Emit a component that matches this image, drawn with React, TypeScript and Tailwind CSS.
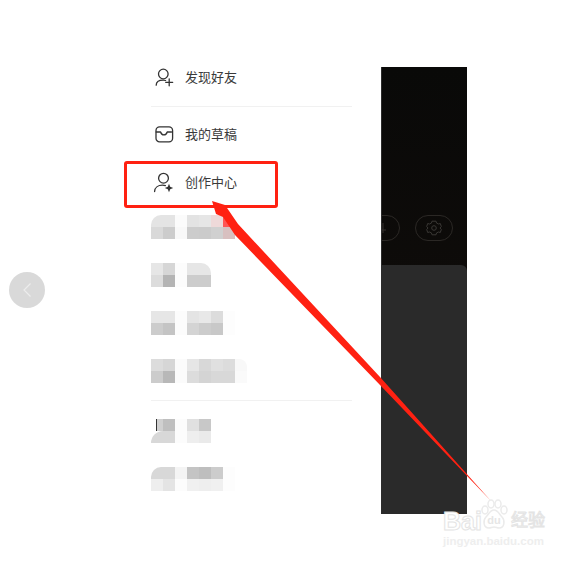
import React from "react";

const MOSAIC: string[][][] = [
  [
    ["bg-[#e4e4e4] rounded-tl-[10px]", "bg-[#e4e4e4]", "bg-[#fbfbfb]", "bg-[#e3e3e3]", "bg-[#e6e6e6]", "bg-[#eed9d9]", "bg-[#ff5555] rounded-tr-[10px]"],
    ["bg-[#d9d9d9]", "bg-[#cccccc]", "bg-[#f8f8f8]", "bg-[#cccccc]", "bg-[#cbcbcb]", "bg-[#d0d0d0]", "bg-[#d8c0c0]"],
  ],
  [
    ["bg-[#e6e6e6]", "bg-[#d6d6d6]", "bg-[#fcfcfc]", "bg-[#e6e6e6]", "bg-[#e6e6e6] rounded-tr-[10px]"],
    ["bg-[#dcdcdc]", "bg-[#b4b4b4]", "bg-[#fcfcfc]", "bg-[#cccccc]", "bg-[#cccccc]"],
  ],
  [
    ["bg-[#e6e6e6]", "bg-[#e6e6e6]", "bg-[#fcfcfc]", "bg-[#e4e4e4]", "bg-[#e8e8e8]", "bg-[#dcdcdc]", "bg-[#fdfdfd]"],
    ["bg-[#cccccc]", "bg-[#c4c4c4]", "bg-[#fcfcfc]", "bg-[#d4d4d4]", "bg-[#cccccc]", "bg-[#c8c8c8]", "bg-[#fdfdfd]"],
  ],
  [
    ["bg-[#dcdcdc]", "bg-[#d6d6d6]", "bg-[#fbfbfb]", "bg-[#e6e6e6]", "bg-[#d8d8d8]", "bg-[#e0e0e0]", "bg-[#dcdcdc]", "bg-[#f8f8f8] rounded-tr-[8px]"],
    ["bg-[#cccccc]", "bg-[#b8b8b8]", "bg-[#fbfbfb]", "bg-[#dcdcdc]", "bg-[#d4d4d4]", "bg-[#d8d8d8]", "bg-[#d8d8d8]", "bg-[#fafafa]"],
  ],
];

const MOSAIC_LOWER: string[][][] = [
  [
    ["bg-[#d0d0d0] border-l-[5px] border-white shadow-[inset_1px_0_0_#333]", "bg-[#bfbfbf]", "bg-[#fcfcfc]", "bg-[#e0e0e0]", "bg-[#c8c8c8]"],
    ["bg-[#d8d8d8] rounded-tl-[12px]", "bg-[#d8d8d8]", "bg-[#fcfcfc]", "bg-[#eeeeee]", "bg-[#eaeaea]"],
  ],
  [
    ["bg-[#d8d8d8] rounded-tl-[10px]", "bg-[#d8d8d8]", "bg-[#f4f4f4]", "bg-[#c4c4c4]", "bg-[#bebebe]", "bg-[#cccccc]", "bg-[#fdfdfd]"],
    ["bg-[#eeeeee]", "bg-[#e4e4e4]", "bg-[#fcfcfc]", "bg-[#f0f0f0]", "bg-[#eeeeee]", "bg-[#f0f0f0]", "bg-[#fdfdfd]"],
  ],
];

const UserPlusIcon = () => (
  <svg width="20" height="20" viewBox="0 0 20 20" fill="none" stroke="#333" strokeWidth="1.3" strokeLinecap="round" className="overflow-visible">
    <circle cx="8.300" cy="7" r="4.800" />
    <path d="M1.200 18.200c0-3.300 2.800-5 7-5 .9 0 1.700.1 2.400.3" />
    <path d="M14.200 11.800v7M10.700 15.300h7" />
  </svg>
);

const UserStarIcon = () => (
  <svg width="20" height="20" viewBox="0 0 20 20" fill="none" stroke="#333" strokeWidth="1.3" strokeLinecap="round" className="overflow-visible">
    <circle cx="8.500" cy="6.200" r="4.900" />
    <path d="M-.4 19.600c0-4 3.400-6.400 8-6.400 1 0 2 .1 2.800.4" />
    <path d="M14 11.800l1.200 3 3 1.200-3 1.200-1.200 3-1.200-3-3-1.200 3-1.200z" fill="#333" stroke="none" />
  </svg>
);

const InboxIcon = () => (
  <svg width="20" height="20" viewBox="0 0 20 20" fill="none" stroke="#333" strokeWidth="1.3" strokeLinecap="round" strokeLinejoin="round">
    <rect x="1" y="2.800" width="16.600" height="15" rx="3.600" />
    <path d="M1.200 8h4.400c.5 1.900 1.800 2.900 3.300 2.900s2.800-1 3.300-2.900h4.300" />
  </svg>
);

const GearIcon = () => (
  <svg width="16" height="16" viewBox="0 0 16 16" fill="none" stroke="#3a3835" strokeWidth="1">
    <path d="M6 1.200h4l.6 1.900 1.900.9 1.800-.5 1 3-1.300 1.500 1.300 1.500-1 3-1.800-.5-1.900.9-.6 1.900H6l-.6-1.900-1.900-.9-1.800.5-1-3L2 8 .7 6.500l1-3 1.800.5 1.900-.9z" />
    <circle cx="8" cy="8" r="2.300" />
  </svg>
);

const PartIcon = () => (
  <svg width="14" height="14" viewBox="0 0 14 14" fill="none" stroke="#34312e" strokeWidth="1">
    <path d="M2 9h10M9 2v10" />
  </svg>
);

const MenuRow = ({ icon, label }: { icon: React.ReactNode; label: string }) => (
  <div className="flex h-12 items-center pl-[4px]">
    <div className="flex w-[30px] shrink-0">{icon}</div>
    <span className="mt-[-1px] text-[13px] text-[#3a3a3a]">{label}</span>
  </div>
);

const MosaicRow = ({ rows }: { rows: string[][] }) => (
  <div className="flex h-12 flex-col justify-center">
    {rows.map((cells, i) => (
      <div key={i} className="flex">
        {cells.map((cell, j) => (
          <div key={j} className={`h-3 w-3 ${cell}`} />
        ))}
      </div>
    ))}
  </div>
);

const DarkPanel = () => (
  <div className="ml-[29px] mt-[67px] flex h-[447px] w-[86px] flex-col overflow-hidden border-l border-[#2c2c2c] bg-gradient-to-b from-[#090908] to-[#130e0b]">
    <div className="ml-[-20px] mt-[148px] flex gap-[15px]">
      <div className="flex h-[26px] w-[38px] items-center justify-center rounded-[13px] border border-[#2b2825]">
        <PartIcon />
      </div>
      <div className="flex h-[26px] w-[38px] items-center justify-center rounded-[13px] border border-[#2b2825]">
        <GearIcon />
      </div>
    </div>
    <div className="mt-[24px] flex-1 rounded-tr-[6px] bg-[#2a2a2a]" />
  </div>
);

const Watermark = () => (
  <div className="absolute left-[443px] top-[498px] w-[106px] select-none font-['Liberation_Sans','Noto_Sans_CJK_SC',sans-serif] text-white">
    <div className="flex h-[33px] items-end">
      <span className="w-[35px] shrink-0 text-[25px] font-bold leading-[20px] [-webkit-text-stroke:1px_#e4e4e4]">Bai</span>
      <svg width="32" height="32" viewBox="0 0 32 32" fill="none" stroke="#ebebeb" strokeWidth="1.500" className="shrink-0">
        <ellipse cx="7" cy="11" rx="3" ry="4" />
        <ellipse cx="13" cy="5" rx="3" ry="4" />
        <ellipse cx="20" cy="5" rx="3" ry="4" />
        <ellipse cx="26" cy="11" rx="3" ry="4" />
        <path d="M16 11c-4 0-5 4-8 7-3 3-3 11 3 11 2 0 3-1 5-1s3 1 5 1c6 0 6-8 3-11-3-3-4-7-8-7z" />
        <text x="16" y="25" fontSize="11" fontWeight="700" textAnchor="middle" fill="#e6e6e6" stroke="none">du</text>
      </svg>
      <span className="ml-[1px] whitespace-nowrap text-[17px] leading-[20px] [-webkit-text-stroke:1px_#e4e4e4]">经验</span>
    </div>
    <div className="mt-[4px] whitespace-nowrap text-[11.500px] font-bold leading-[12px] text-[#eeeeee]">jingyan.baidu.com</div>
  </div>
);

export default function App() {
  return (
    <div className="relative flex h-[561px] w-[578px] overflow-hidden bg-white font-['Noto_Sans_CJK_SC','Liberation_Sans',sans-serif]">
      <div className="ml-[151px] mt-[53px] w-[201px]">
        <MenuRow icon={<UserPlusIcon />} label="发现好友" />
        <div className="mb-[3px] mt-[5px] h-px bg-[#f1f1f1]" />
        <MenuRow icon={<InboxIcon />} label="我的草稿" />
        <MenuRow icon={<UserStarIcon />} label="创作中心" />
        <div className="mt-[-3px]">
          {MOSAIC.map((rows, i) => (
            <MosaicRow key={i} rows={rows} />
          ))}
        </div>
        <div className="mb-[6px] mt-[5px] h-px bg-[#f1f1f1]" />
        {MOSAIC_LOWER.map((rows, i) => (
          <MosaicRow key={i} rows={rows} />
        ))}
      </div>

      <DarkPanel />

      {/* back button floats over the page */}
      <div className="absolute left-[9px] top-[272px] flex h-9 w-9 items-center justify-center rounded-full bg-[#d9d9d9]">
        <svg width="10" height="16" viewBox="0 0 10 16" fill="none" stroke="#ececec" strokeWidth="1.200">
          <path d="M8.500 1.500 2 8l6.500 6.500" />
        </svg>
      </div>

      {/* annotation layer */}
      <div className="absolute left-[124px] top-[161px] h-[47px] w-[154px] rounded-[3px] border-[3px] border-[#ff2112]" />
      <svg className="pointer-events-none absolute left-0 top-0" width="578" height="561" viewBox="0 0 578 561">
        <polygon fill="#ff2112" points="212,201 225,205 238,224 380,377 491,501 380,385 235,235 223,217 216,214" />
      </svg>

      <Watermark />
    </div>
  );
}
